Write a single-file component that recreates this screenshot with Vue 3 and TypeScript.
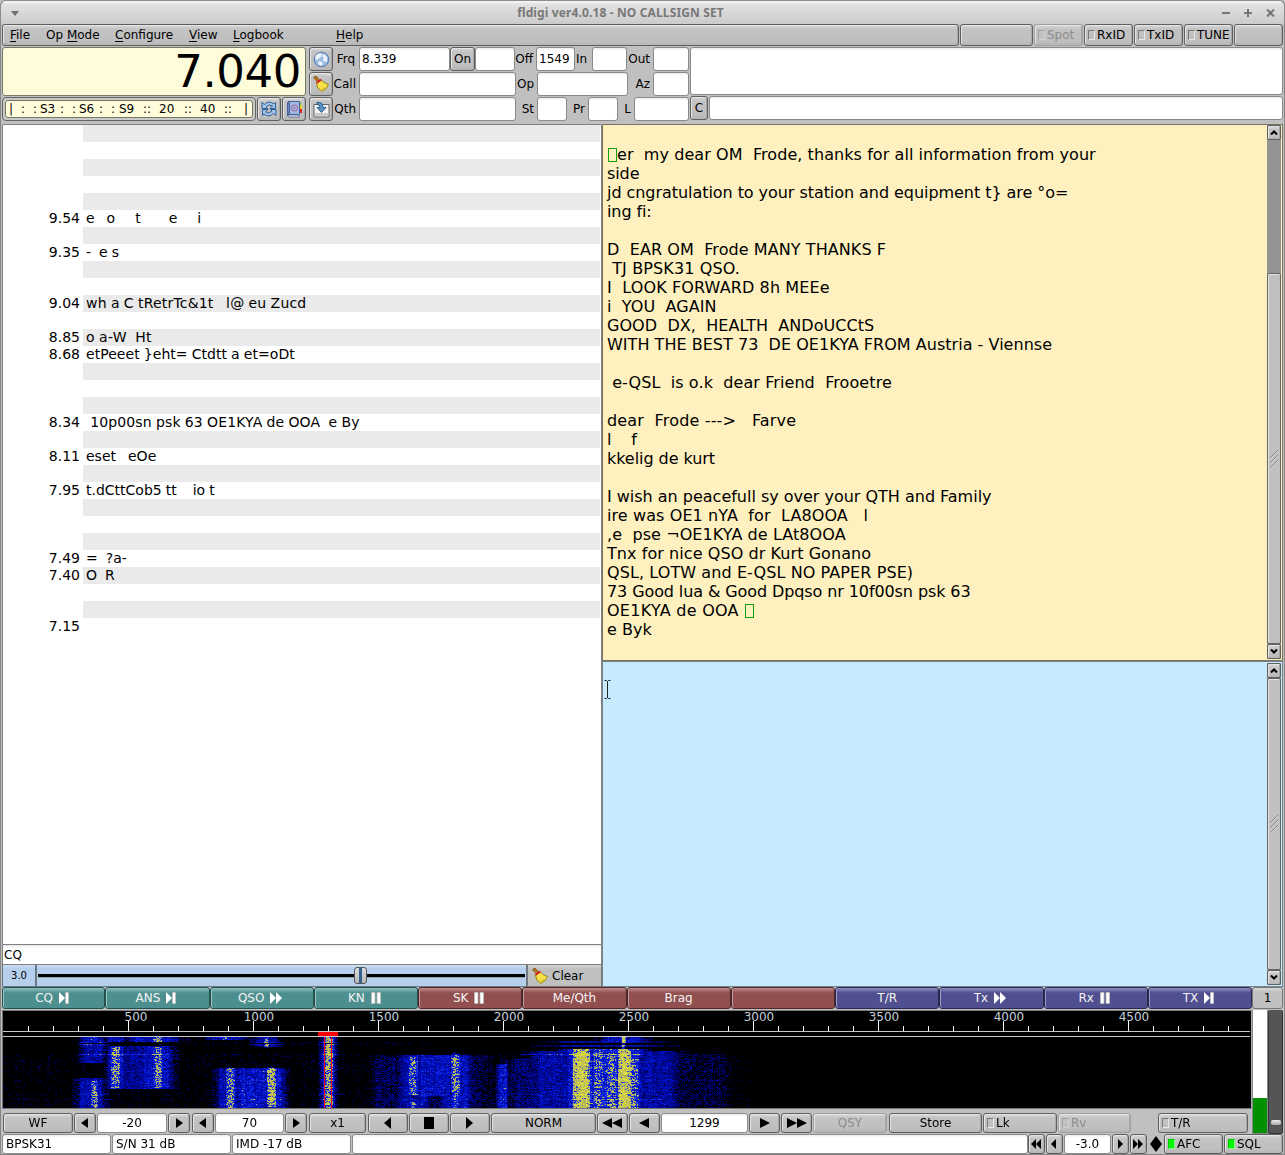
<script setup lang="ts">
import { onMounted, ref } from 'vue'

interface Channel { freq: string; text: string; tracking: number }
interface Line { text: string; tracking: number }
interface Macro { label: string; icon: '' | 'next' | 'ff' | 'pause'; tone: 'teal' | 'red' | 'violet' }
interface Signal { x: number; w: number; y0: number; y1: number; s: number }

const channels: Channel[] = Array.from({ length: 30 }, () => ({ freq: '', text: '', tracking: 0 }))
const heard: Record<number, [string, string, number]> = {
  5: ['9.54', 'e   o     t       e     i', 0],
  7: ['9.35', '-  e s', 0],
  10: ['9.04', 'wh a C tRetrTc&1t   l@ eu Zucd', 0.19],
  12: ['8.85', 'o a-W  Ht', 0.25],
  13: ['8.68', 'etPeeet }eht= Ctdtt a et=oDt', 0.05],
  17: ['8.34', ' 10p00sn psk 63 OE1KYA de OOA  e By', 0.14],
  19: ['8.11', 'eset   eOe', 0],
  21: ['7.95', 't.dCttCob5 tt    io t', 0],
  25: ['7.49', '=  ?a-', 0],
  26: ['7.40', 'O  R', 0],
  29: ['7.15', '', 0],
}
for (const key of Object.keys(heard)) {
  const [freq, text, tracking] = heard[Number(key)]
  channels[Number(key)] = { freq, text, tracking }
}

// '~' marks a non-printable character, drawn as a hollow green box
const received: Line[] = [
  { text: '', tracking: 0 },
  { text: '~er  my dear OM  Frode, thanks for all information from your', tracking: 0.07 },
  { text: 'side', tracking: -0.1 },
  { text: 'jd cngratulation to your station and equipment t} are °o=', tracking: -0.055 },
  { text: 'ing fi:', tracking: -0.1 },
  { text: '', tracking: 0 },
  { text: 'D  EAR OM  Frode MANY THANKS F', tracking: 0.08 },
  { text: ' TJ BPSK31 QSO.', tracking: 0.12 },
  { text: 'I  LOOK FORWARD 8h MEEe', tracking: 0.12 },
  { text: 'i  YOU  AGAIN', tracking: 0.06 },
  { text: 'GOOD  DX,  HEALTH  ANDoUCCtS', tracking: 0.05 },
  { text: 'WITH THE BEST 73  DE OE1KYA FROM Austria - Viennse', tracking: 0.03 },
  { text: '', tracking: 0 },
  { text: ' e-QSL  is o.k  dear Friend  Frooetre', tracking: 0.08 },
  { text: '', tracking: 0 },
  { text: 'dear  Frode --->   Farve', tracking: 0.17 },
  { text: 'l    f', tracking: -0.1 },
  { text: 'kkelig de kurt', tracking: -0.05 },
  { text: '', tracking: 0 },
  { text: 'I wish an peacefull sy over your QTH and Family', tracking: -0.01 },
  { text: 'ire was OE1 nYA  for  LA8OOA   l', tracking: 0.1 },
  { text: ',e  pse ¬OE1KYA de LAt8OOA', tracking: 0.08 },
  { text: 'Tnx for nice QSO dr Kurt Gonano', tracking: 0.07 },
  { text: 'QSL, LOTW and E-QSL NO PAPER PSE)', tracking: 0.09 },
  { text: '73 Good lua & Good Dpqso nr 10f00sn psk 63', tracking: -0.1 },
  { text: 'OE1KYA de OOA ~', tracking: 0.27 },
  { text: 'e Byk', tracking: 0 },
]
const split = (line: string): string[] => line.split(/(~)/).filter((p) => p.length > 0)

const macros: Macro[] = [
  { label: 'CQ', icon: 'next', tone: 'teal' },
  { label: 'ANS', icon: 'next', tone: 'teal' },
  { label: 'QSO', icon: 'ff', tone: 'teal' },
  { label: 'KN', icon: 'pause', tone: 'teal' },
  { label: 'SK', icon: 'pause', tone: 'red' },
  { label: 'Me/Qth', icon: '', tone: 'red' },
  { label: 'Brag', icon: '', tone: 'red' },
  { label: '', icon: '', tone: 'red' },
  { label: 'T/R', icon: '', tone: 'violet' },
  { label: 'Tx', icon: 'ff', tone: 'violet' },
  { label: 'Rx', icon: 'pause', tone: 'violet' },
  { label: 'TX', icon: 'next', tone: 'violet' },
]

const ticks = Array.from({ length: 49 }, (_, i) => i + 1)
const labels = Array.from({ length: 9 }, (_, i) => (i + 1) * 500)

const fall = ref<HTMLCanvasElement | null>(null)

// broad blue areas of each signal
const bodies: Signal[] = [
  { x: 90, w: 11, y0: 0, y1: 26, s: 0.46 },
  { x: 88, w: 13, y0: 41, y1: 71, s: 0.47 },
  { x: 113, w: 8, y0: 9, y1: 52, s: 0.54 },
  { x: 153, w: 15, y0: 9, y1: 52, s: 0.52 },
  { x: 131, w: 14, y0: 9, y1: 52, s: 0.42 },
  { x: 112, w: 9, y0: 0, y1: 5, s: 0.5 },
  { x: 150, w: 24, y0: 0, y1: 5, s: 0.52 },
  { x: 226, w: 12, y0: 31, y1: 71, s: 0.48 },
  { x: 248, w: 14, y0: 31, y1: 71, s: 0.55 },
  { x: 268, w: 12, y0: 31, y1: 71, s: 0.56 },
  { x: 222, w: 18, y0: 0, y1: 3, s: 0.5 },
  { x: 263, w: 12, y0: 0, y1: 10, s: 0.4 },
  { x: 325, w: 7, y0: 0, y1: 71, s: 0.54 },
  { x: 411, w: 15, y0: 18, y1: 71, s: 0.48 },
  { x: 431, w: 18, y0: 18, y1: 59, s: 0.54 },
  { x: 452, w: 15, y0: 18, y1: 71, s: 0.5 },
  { x: 384, w: 14, y0: 22, y1: 71, s: 0.27 },
  { x: 430, w: 55, y0: 18, y1: 71, s: 0.26 },
  { x: 499, w: 5, y0: 27, y1: 71, s: 0.56 },
  { x: 545, w: 40, y0: 22, y1: 71, s: 0.33 },
  { x: 578, w: 16, y0: 12, y1: 71, s: 0.58 },
  { x: 600, w: 24, y0: 12, y1: 71, s: 0.61 },
  { x: 622, w: 17, y0: 12, y1: 71, s: 0.61 },
  { x: 560, w: 30, y0: 14, y1: 71, s: 0.45 },
  { x: 640, w: 32, y0: 14, y1: 71, s: 0.47 },
  { x: 620, w: 20, y0: 0, y1: 5, s: 0.52 },
  { x: 605, w: 50, y0: 4, y1: 6, s: 0.44 },
  { x: 602, w: 55, y0: 8, y1: 10, s: 0.4 },
  { x: 690, w: 38, y0: 17, y1: 71, s: 0.22 },
]
// bright cores
const cores: Signal[] = [
  { x: 90, w: 3, y0: 0, y1: 4, s: 0.24 },
  { x: 91, w: 3, y0: 44, y1: 71, s: 0.31 },
  { x: 112, w: 4, y0: 10, y1: 51, s: 0.26 },
  { x: 154, w: 4, y0: 0, y1: 5, s: 0.34 },
  { x: 154, w: 4, y0: 10, y1: 51, s: 0.27 },
  { x: 221, w: 3, y0: 0, y1: 3, s: 0.34 },
  { x: 263, w: 2, y0: 0, y1: 11, s: 0.4 },
  { x: 227, w: 4, y0: 31, y1: 71, s: 0.32 },
  { x: 268, w: 4, y0: 30, y1: 70, s: 0.32 },
  { x: 325, w: 4, y0: 0, y1: 71, s: 0.34 },
  { x: 410, w: 4, y0: 20, y1: 58, s: 0.27 },
  { x: 410, w: 3, y0: 65, y1: 71, s: 0.26 },
  { x: 452, w: 4, y0: 15, y1: 57, s: 0.28 },
  { x: 452, w: 3, y0: 57, y1: 71, s: 0.18 },
  { x: 578, w: 8, y0: 12, y1: 71, s: 0.42 },
  { x: 595, w: 4, y0: 12, y1: 71, s: 0.15 },
  { x: 608, w: 4, y0: 16, y1: 71, s: 0.15 },
  { x: 621, w: 6, y0: 12, y1: 71, s: 0.4 },
  { x: 620, w: 2, y0: 0, y1: 12, s: 0.5 },
  { x: 630, w: 4, y0: 22, y1: 71, s: 0.12 },
]

onMounted(() => {
  const cv = fall.value
  const ctx = cv ? cv.getContext('2d') : null
  if (!cv || !ctx) return
  const W = cv.width
  const H = cv.height
  const img = ctx.createImageData(W, H)
  let seed = 7040
  const rnd = (): number => {
    seed = (seed * 1664525 + 1013904223) >>> 0
    return seed / 4294967296
  }
  const column = Array.from({ length: W }, () => (rnd() - 0.5) * 0.09)
  let prev = 0
  for (let y = 0; y < H; y++) {
    const rowNoise = (rnd() - 0.5) * 0.06
    for (let x = 0; x < W; x++) {
      let v = 0
      for (const b of bodies) {
        if (y < b.y0 || y >= b.y1) continue
        const d = Math.abs(x - b.x) / b.w
        if (d < 1.6) v = Math.max(v, b.s * (d < 0.75 ? 1 : Math.exp(-(d - 0.75) * 1.6)))
      }
      for (const c of cores) {
        if (y < c.y0 || y >= c.y1) continue
        const d = Math.abs(x - c.x) / c.w
        if (d <= 1.1) v += c.s * (1 - d * d * 0.5)
      }
      prev = prev * 0.35 + (rnd() - 0.5) * 0.5
      const noise = prev * (v > 0.7 ? 0.85 : v > 0.15 ? 0.6 : 0.75)
      if (x < 750) {
        if (v < 0.15) v = y > 17 ? 0.03 : -0.1
        if (x > 560 && v < 0.2) v -= 0.03
        if (y % 5 === 2 && y > 55 && x % 3 !== 0) v += 0.11
        if (y === 17 && x > 60 && x < 640) v += 0.2
        if ((y === 5 || y === 7) && x > 65 && x < 430) v += 0.2
        v += noise + column[x] + rowNoise
        if (y === 6 && x < 345) v *= 0.35
      }
      let r = 0, g = 0, bl = 0
      if (v > 0.78) {
        const t = Math.min(1, (v - 0.78) / 0.4)
        r = 165 + 60 * t; g = 165 + 60 * t; bl = 110 - 55 * t
      } else if (v > 0.62) {
        const t = (v - 0.62) / 0.16
        r = 5 + 40 * t; g = 25 + 50 * t; bl = 225
      } else if (v > 0.18) {
        const t = (v - 0.18) / 0.44
        g = 22 * t * t; bl = 45 + 180 * t
      }
      const i = (y * W + x) * 4
      img.data[i] = r; img.data[i + 1] = g; img.data[i + 2] = bl; img.data[i + 3] = 255
    }
  }
  ctx.putImageData(img, 0, 0)
})
</script>

<template>
  <div class="window">
    <header class="titlebar">
      <svg class="tmenu" width="8" height="5" viewBox="0 0 8 5"><path d="M0 0h8L4 5z" fill="#6e6e6e" /></svg>
      <span class="title">fldigi ver4.0.18 - NO CALLSIGN SET</span>
      <svg class="tbtns" width="54" height="10" viewBox="0 0 54 10" stroke="#777" stroke-width="2" fill="none">
        <path d="M0 5h8M22 5h8M26 1v8M45 1.500l7 7M52 1.500l-7 7" />
      </svg>
    </header>

    <nav class="menurow">
      <div class="box menus">
        <span class="m1"><u>F</u>ile</span><span class="m2">Op <u>M</u>ode</span><span class="m3"><u>C</u>onfigure</span>
        <span class="m4"><u>V</u>iew</span><span class="m5"><u>L</u>ogbook</span><span class="m6"><u>H</u>elp</span>
      </div>
      <div class="box"></div>
      <div class="box light off"><i class="led"></i>Spot</div>
      <div class="box light"><i class="led"></i>RxID</div>
      <div class="box light"><i class="led"></i>TxID</div>
      <div class="box light"><i class="led"></i>TUNE</div>
      <div class="box"></div>
    </nav>

    <section class="top">
      <div class="rig">
        <div class="freq">7.040</div>
        <div class="meterrow">
          <div class="meter"><div class="scale"><span>|</span><span>:</span><span>:</span><span>S3</span><span>:</span><span>:</span><span>S6</span><span>:</span><span>:</span><span>S9</span><span>::</span><span>20</span><span>::</span><span>40</span><span>::</span><span>|</span></div></div>
          <button class="btn sq">
            <svg width="16" height="16" viewBox="0 0 16 16"><path d="M1 7.500V1.500l2.500 2Q8-1 13 3l1.500-1.500v6H9L11.500 5Q8 2.500 5 6l1.500 1.500z" fill="#a4c4e6" stroke="#31629d" /><path d="M15 8.500v6l-2.500-2Q8 17 3 13l-1.500 1.500v-6H7L4.500 11Q8 13.500 11 10L9.500 8.500z" fill="#a4c4e6" stroke="#31629d" /></svg>
          </button>
          <button class="btn sq">
            <svg width="17" height="17" viewBox="0 0 17 17"><path d="M13 4h3v4h-3z" fill="#e8d020" /><path d="M13 8h3v4h-3z" fill="#d22" /><path d="M13 1h2v3h-2z" fill="#7ac142" /><path d="M2.500.5h11v13h-11z" fill="#a3b8de" stroke="#48639c" /><path d="M1.500 2q0-1.500 2-1.500v13q-2 0-2 1.500z" fill="#6a88c4" stroke="#48639c" /><path d="M2 14h11v2H3q-1 0-1-2z" fill="#eee" stroke="#48639c" stroke-width=".8" /><circle cx="8.500" cy="7" r="3" fill="none" stroke="#a070ae" stroke-width="1.100" /><circle cx="8.500" cy="7" r="1" fill="#a070ae" /></svg>
          </button>
        </div>
      </div>

      <div class="tools">
        <button class="btn sq">
          <svg width="17" height="17" viewBox="0 0 17 17"><circle cx="8.500" cy="8.500" r="7.300" fill="#9bbbe2" stroke="#5079b0" /><path d="M3 4l4-2 2 1-1 3-2 1-1 2-3-1zM11 3l3 3v4l-2 1-2-2 1-2-2-2zM6 10l3 1 1 2-2 2-3-2z" fill="#eef4fb" /></svg>
        </button>
        <button class="btn sq">
          <svg width="18" height="18" viewBox="0 0 18 18"><path d="M1.500 2.500L4 1l3.500 4L5 6.500z" fill="#b8741c" stroke="#71420c" stroke-width=".7" /><path d="M4.500 8.500L9.500 5q1 2.500 7 4.500-1 4-6.500 7Q4.500 13.500 4.500 8.500z" fill="#f7e04a" stroke="#8f7a0c" stroke-width=".9" /><path d="M4.300 8l5-3.500" stroke="#d22" stroke-width="1.700" /><path d="M9 15l4-2.500" stroke="#c2a81c" stroke-width=".8" /></svg>
        </button>
        <button class="btn sq">
          <svg width="17" height="17" viewBox="0 0 17 17"><path d="M1 3.500h15v12.500H1z" fill="#f3f3f3" stroke="#666" /><path d="M2 12h13v3H2z" fill="#c9c9c9" /><path d="M4 1.500q6-1 6 5h3l-4.500 5L4 6.500h3q0-3-3-3z" fill="#5b94c4" stroke="#24587f" stroke-width=".9" /></svg>
        </button>
      </div>

      <div class="log">
        <div class="lrow r1">
          <label class="first">Frq</label><div class="field">8.339</div><button class="btn">On</button><div class="field"></div><label>Off</label><div class="field">1549</div><label class="left">In</label><div class="field"></div><label>Out</label><div class="field"></div>
        </div>
        <div class="lrow r2">
          <label>Call</label><div class="field"></div><label>Op</label><div class="field"></div><label>Az</label><div class="field"></div>
        </div>
        <div class="lrow r3">
          <label>Qth</label><div class="field"></div><label>St</label><div class="field"></div><label>Pr</label><div class="field"></div><label>L</label><div class="field"></div>
        </div>
      </div>

      <div class="notes">
        <div class="field big"></div>
        <div class="crow"><button class="btn">C</button><div class="field"></div></div>
      </div>
    </section>

    <main class="main">
      <div class="browser">
        <div class="list">
          <div v-for="(c, i) in channels" :key="i" class="ch" :class="{ odd: i % 2 === 0 }">
            <span class="f">{{ c.freq }}</span><span class="t" :style="{ letterSpacing: c.tracking + 'px' }">{{ c.text }}</span>
          </div>
        </div>
        <div class="search">CQ</div>
        <div class="sliderrow">
          <div class="val">3.0</div>
          <div class="slider"><div class="groove"></div><div class="knob"></div></div>
          <div class="clear">
            <svg width="18" height="18" viewBox="0 0 18 18"><path d="M1.500 2.500L4 1l3.500 4L5 6.500z" fill="#b8741c" stroke="#71420c" stroke-width=".7" /><path d="M4.500 8.500L9.500 5q1 2.500 7 4.500-1 4-6.500 7Q4.500 13.500 4.500 8.500z" fill="#f7e04a" stroke="#8f7a0c" stroke-width=".9" /><path d="M4.300 8l5-3.500" stroke="#d22" stroke-width="1.700" /><path d="M9 15l4-2.500" stroke="#c2a81c" stroke-width=".8" /></svg>
            Clear
          </div>
        </div>
      </div>
      <div class="panes">
        <div class="pane rx">
          <div class="text">
            <div v-for="(line, i) in received" :key="i" class="ln" :style="{ letterSpacing: line.tracking + 'px' }"><template v-for="(p, j) in split(line.text)" :key="j"><i v-if="p === '~'" class="ctl"></i><span v-else>{{ p }}</span></template></div>
          </div>
          <div class="sb">
            <div class="btn arrow"><svg width="8" height="5" viewBox="0 0 8 5"><path d="M1 4.500L4 1.500l3 3" stroke="#000" stroke-width="2" fill="none" /></svg></div>
            <div class="gapline"></div>
            <div class="thumb"><svg width="10" height="22" viewBox="0 0 10 22"><path d="M1 10l8-8M1 15l8-8M1 20l8-8" stroke="#888" /><path d="M1 11l8-8M1 16l8-8M1 21l8-8" stroke="#ddd" stroke-width=".7" /></svg></div>
            <div class="btn arrow"><svg width="8" height="5" viewBox="0 0 8 5"><path d="M1 .5l3 3 3-3" stroke="#000" stroke-width="2" fill="none" /></svg></div>
          </div>
        </div>
        <div class="pane tx">
          <div class="text">
            <svg class="beam" width="7" height="19" viewBox="0 0 7 19"><path d="M.5.5h2l1 1 1-1h2M.5 18.500h2l1-1 1 1h2M3.500 1v17" stroke="#222" fill="none" /></svg>
          </div>
          <div class="sb">
            <div class="btn arrow"><svg width="8" height="5" viewBox="0 0 8 5"><path d="M1 4.500L4 1.500l3 3" stroke="#000" stroke-width="2" fill="none" /></svg></div>
            <div class="thumb"><svg width="10" height="22" viewBox="0 0 10 22"><path d="M1 10l8-8M1 15l8-8M1 20l8-8" stroke="#888" /><path d="M1 11l8-8M1 16l8-8M1 21l8-8" stroke="#ddd" stroke-width=".7" /></svg></div>
            <div class="btn arrow"><svg width="8" height="5" viewBox="0 0 8 5"><path d="M1 .5l3 3 3-3" stroke="#000" stroke-width="2" fill="none" /></svg></div>
          </div>
        </div>
      </div>
    </main>

    <div class="macros">
      <div v-for="(m, i) in macros" :key="i" class="macro" :class="[m.tone, { withicon: m.icon }]">
        <span v-if="m.label">{{ m.label }}</span>
        <svg v-if="m.icon === 'next'" width="10" height="12" viewBox="0 0 10 12"><path d="M0 0l6 6-6 6z" fill="#fff" /><path d="M6.500 0.500h3v11h-3z" fill="#fff" stroke="#bbb" stroke-width=".8" /></svg>
        <svg v-else-if="m.icon === 'ff'" width="12" height="12" viewBox="0 0 12 12"><path d="M0 0l6 6-6 6zM6 0l6 6-6 6z" fill="#fff" /></svg>
        <svg v-else-if="m.icon === 'pause'" width="10" height="12" viewBox="0 0 10 12"><path d="M.5.5h3.500v11H.5zM6 .5h3.500v11H6z" fill="#fff" stroke="#bbb" stroke-width=".8" /></svg>
      </div>
      <div class="macro page">1</div>
    </div>

    <div class="lower">
      <div class="wfcol">
        <div class="wf">
          <svg class="axis" width="1247" height="26" viewBox="0 0 1247 26">
            <rect v-for="t in ticks" :key="t" :x="t * 25" :y="t % 5 === 0 ? 10 : 15" width="1" :height="t % 5 === 0 ? 10 : 5" fill="#fff" />
            <text v-for="l in labels" :key="l" :x="l / 4 + (l === 500 ? 8 : 6)" y="10" text-anchor="middle">{{ l }}</text>
            <rect x="0" y="20" width="1247" height="1" fill="#c8c8c8" />
            <rect x="0" y="25" width="1247" height="1" fill="#c8c8c8" />
            <rect x="315" y="21" width="20" height="4" fill="#f00" />
          </svg>
          <div class="fallwrap">
            <canvas ref="fall" width="1247" height="71"></canvas>
            <div class="marker"></div>
          </div>
        </div>
        <div class="controls">
          <div class="btn">WF</div>
          <div class="btn nudge"><svg width="7" height="10" viewBox="0 0 7 10"><path d="M7 0v10L0 5z" /></svg></div>
          <div class="field num">-20</div>
          <div class="btn"><svg width="7" height="10" viewBox="0 0 7 10"><path d="M0 0v10l7-5z" /></svg></div>
          <div class="btn nudge"><svg width="7" height="10" viewBox="0 0 7 10"><path d="M7 0v10L0 5z" /></svg></div>
          <div class="field num">70</div>
          <div class="btn"><svg width="7" height="10" viewBox="0 0 7 10"><path d="M0 0v10l7-5z" /></svg></div>
          <div class="btn">x1</div>
          <div class="btn nudge"><svg width="7" height="12" viewBox="0 0 7 12"><path d="M7 0v12L0 6z" /></svg></div>
          <div class="btn"><svg width="10" height="12" viewBox="0 0 10 12"><path d="M0 0h10v12H0z" /></svg></div>
          <div class="btn nudge"><svg width="7" height="12" viewBox="0 0 7 12"><path d="M0 0v12l7-6z" /></svg></div>
          <div class="btn">NORM</div>
          <div class="btn nudge"><svg width="20" height="10" viewBox="0 0 20 10"><path d="M10 0v10L0 5zM20 0v10L10 5z" /></svg></div>
          <div class="btn nudge"><svg width="10" height="10" viewBox="0 0 10 10"><path d="M10 0v10L0 5z" /></svg></div>
          <div class="field num">1299</div>
          <div class="btn"><svg width="10" height="10" viewBox="0 0 10 10"><path d="M0 0v10l10-5z" /></svg></div>
          <div class="btn"><svg width="20" height="10" viewBox="0 0 20 10"><path d="M0 0v10l10-5zM10 0v10l10-5z" /></svg></div>
          <div class="btn off">QSY</div>
          <div class="btn">Store</div>
          <div class="btn light"><i class="led"></i>Lk</div>
          <div class="btn light off"><i class="led"></i>Rv</div>
          <div class="btn light tr"><i class="led"></i>T/R</div>
        </div>
      </div>
      <div class="signal"><div class="level"></div></div>
      <div class="squelch"><div class="sqknob"></div></div>
    </div>

    <footer class="status">
      <div class="field">BPSK31</div>
      <div class="field">S/N 31 dB</div>
      <div class="field">IMD -17 dB</div>
      <div class="field"></div>
      <div class="btn nudge"><svg width="10" height="10" viewBox="0 0 10 10"><path d="M5 0v10L0 5zM10 0v10L5 5z" /></svg></div>
      <div class="btn nudge"><svg width="5" height="10" viewBox="0 0 5 10"><path d="M5 0v10L0 5z" /></svg></div>
      <div class="field num">-3.0</div>
      <div class="btn"><svg width="5" height="10" viewBox="0 0 5 10"><path d="M0 0v10l5-5z" /></svg></div>
      <div class="btn nudge"><svg width="10" height="10" viewBox="0 0 10 10"><path d="M0 0v10l5-5zM5 0v10l5-5z" /></svg></div>
      <div class="dia"><svg width="12" height="16" viewBox="0 0 12 16"><path d="M6 0l6 8-6 8-6-8z" /></svg></div>
      <div class="btn light on"><i class="led"></i>AFC</div>
      <div class="btn light on"><i class="led"></i>SQL</div>
    </footer>
  </div>
</template>

<style>
body { margin: 0; background: #c0c0c0; overflow: hidden; }
</style>

<style scoped>
* { box-sizing: border-box; }
.window {
  width: 1285px; height: 1155px; background: #c0c0c0; color: #000;
  font: 12px/14px "DejaVu Sans", sans-serif;
  border: solid #858585; border-width: 0 1px 1px 1px; padding: 0 1px;
  display: flex; flex-direction: column; border-radius: 6px 6px 0 0;
}
.titlebar {
  height: 24px; margin: 0 -2px; padding: 1px 8px 0 10px; flex: none;
  display: grid; grid-template-columns: 8px 1fr 54px; align-items: center;
  background: linear-gradient(#f4f4f4 1px, #e2e2e2 3px, #cbcbcb);
  border: 1px solid #8c8c8c; border-bottom: 0; border-radius: 6px 6px 0 0;
}
.title { text-align: center; font: bold 12px/16px "Noto Sans", "Open Sans", sans-serif; letter-spacing: 0.13px; color: #787878; }
.box, .btn {
  font: inherit; color: inherit; padding: 0; border: 1px solid #5f5f5f; border-radius: 3px;
  background: linear-gradient(#d9d9d9, #c3c3c3 4px, #bfbfbf 80%, #b6b6b6);
  box-shadow: inset 1px 1px #e4e4e4, inset -1px 0 #a8a8a8;
  display: flex; align-items: center; justify-content: center;
}
.nudge { padding-right: 2px; }
.off { color: #8c8c8c; border-color: #a0a0a0; }
.field {
  background: linear-gradient(#eee, #fff 3px); border: 1px solid #8a8a8a; border-radius: 3px;
  display: flex; align-items: center; padding-left: 3px; white-space: pre;
}
.num { justify-content: center; padding: 0; }
.led { width: 7px; height: 10px; border: 1px solid; border-color: #777 #e8e8e8 #e8e8e8 #777; flex: none; }
.off .led { border-color: #a0a0a0 #d0d0d0 #d0d0d0 #a0a0a0; }
.on .led { background: #00f800; border-color: #00c800 #80ff80 #80ff80 #00c800; }
.light { justify-content: flex-start; padding-left: 3px; gap: 2px; }

.menurow { flex: none; height: 22px; display: grid; grid-template-columns: 957px 73px 49px 49px 49px 49px 1fr; gap: 1px; }
.menus { justify-content: flex-start; white-space: pre; }
.menus span { text-align: left; height: 14px; }
.menus u { text-underline-offset: 2px; text-decoration-thickness: 1px; }
.m1 { width: 36px; margin-left: 7px; }
.m2 { width: 69px; }
.m3 { width: 74px; }
.m4 { width: 44px; }
.m5 { width: 103px; }

.top { flex: none; height: 78px; padding-top: 1px; display: flex; }
.rig { width: 305px; }
.freq {
  width: 304px; height: 49px; margin-bottom: 1px; border: 1px solid #777766; border-radius: 3px; background: #fffcdc;
  font-size: 45px; line-height: 47px; text-align: right; padding-right: 4px; letter-spacing: -0.4px;
}
.meterrow { display: flex; height: 24px; }
.meter { width: 254px; height: 24px; margin-right: 1px; padding: 2px; border: 1px solid #666; border-radius: 4px; background: #c8c8c8; }
.scale {
  height: 18px; border: 1px solid #777766; border-radius: 3px; background: #fffcdc;
  display: grid; grid-template-columns: 12px 12px 7px 20px 12px 7px 20px 12px 8px 24px 16px 25px 16px 24px 20px 6px;
  font-size: 12px; line-height: 16px; padding-left: 3px;
}
.sq { width: 24px; height: 24px; flex: none; }
.meterrow .sq { margin-right: 1px; }
.tools { width: 25px; padding-left: 2px; display: flex; flex-direction: column; gap: 1px; }
.log { width: 357px; display: flex; flex-direction: column; gap: 1px; }
.lrow { height: 24px; display: grid; align-items: center; }
.lrow .field, .lrow .btn { height: 24px; }
.lrow .field { padding-left: 2px; }
.lrow label { text-align: right; padding-right: 3px; }
.lrow label.first { padding-right: 4px; }
.lrow label.left { text-align: left; padding-left: 1px; }
.r1 { grid-template-columns: 27px 91px 25px 40px 21px 39px 17px 35px 26px 36px; }
.r2 { grid-template-columns: 27px 157px 21px 91px 25px 36px; }
.r3 { grid-template-columns: 27px 157px 21px 30px 21px 30px 16px 55px; }
.notes { flex: 1; padding-left: 1px; }
.big { height: 48px; margin-bottom: 1px; }
.crow { display: flex; height: 24px; }
.crow .btn { width: 18px; height: 24px; margin-right: 1px; }
.crow .field { flex: 1; height: 24px; }

.main { flex: none; height: 863px; display: flex; }
.browser { width: 600px; display: flex; flex-direction: column; }
.list { height: 821px; background: #fff; border: 1px solid #808080; border-radius: 2px 2px 0 0; font-size: 14px; line-height: 17px; }
.ch { height: 17px; display: flex; white-space: pre; margin-right: 1px; }
.f { width: 80px; padding-right: 3px; text-align: right; }
.t { flex: 1; padding-left: 3px; word-spacing: -0.45px; }
.odd .t { background: #eaeaea; }
.search { height: 20px; background: linear-gradient(#e8e8e8, #fff 3px); border: solid #808080; border-width: 0 1px 1px; line-height: 21px; padding-left: 1px; }
.sliderrow { height: 22px; display: grid; grid-template-columns: 34px 491px 75px; }
.val, .slider, .clear { border: 1px solid #6a7785; border-top: 0; background: linear-gradient(#cbdff5, #b5cfec 4px); }
.val { font-size: 10px; line-height: 21px; text-align: center; }
.slider { display: grid; align-items: center; }
.groove { grid-area: 1/1; height: 3px; background: #000; box-shadow: 0 1px #8aa; margin: 0 1px; }
.knob {
  grid-area: 1/1; width: 13px; height: 17px; margin-left: 317px; border: 1px solid #555; border-radius: 3px;
  background: linear-gradient(90deg, transparent 4px, #335f8f 4px, #335f8f 7px, transparent 7px), linear-gradient(#ddd, #b5b5b5);
}
.clear { background: linear-gradient(#d5d5d5, #c0c0c0 4px); border-color: #777; display: flex; align-items: center; gap: 3px; padding-left: 3px; }

.panes { flex: 1; display: flex; flex-direction: column; }
.pane { border: 1px solid #7b7460; display: flex; }
.rx { height: 537px; background: #fff0bf; }
.tx { height: 326px; background: #c8eaff; border-color: #75858f; }
.text { flex: 1; padding: 1px 0 0 4px; font-size: 16px; }
.ln { height: 19px; line-height: 19px; white-space: pre; }
.ctl { display: inline-block; width: 9px; height: 14px; margin: 0 0 0 1px; vertical-align: -2px; border: 1px solid #12a012; }
.sb { width: 14px; margin-right: 1px; background: #949494; display: flex; flex-direction: column; }
.rx .sb { margin: 0 1px 1px 0; }
.tx .sb { margin: 1px 1px 1px 0; }
.arrow { height: 15px; flex: none; border-radius: 2px; }
.gapline { height: 133px; flex: none; }
.thumb {
  flex: 1; border: 1px solid #666; border-radius: 2px; background: #c0c0c0;
  box-shadow: inset 1px 1px #e2e2e2; display: flex; align-items: center; justify-content: center;
}
.beam { display: block; margin: 17px 0 0 -3px; }

.macros { flex: none; height: 23px; display: grid; grid-template-columns: 103.3px repeat(11, 104.25px) 1fr; }
.macro {
  border: solid; border-width: 1px; border-radius: 3px; color: #f4f4f4;
  display: flex; align-items: center; justify-content: center; gap: 6px; height: 22px;
}
.withicon { padding-right: 3px; }
.teal { border-color: #24504f; background: linear-gradient(#8fc0c0, #4d8f8f 5px); box-shadow: inset 1px 0 #9cc6c5; }
.red { border-color: #4e2626; background: linear-gradient(#c08e8e, #914f4f 5px); box-shadow: inset 1px 0 #c59c9c; }
.violet { border-color: #27274f; background: linear-gradient(#8f8ec0, #504f8f 5px); box-shadow: inset 1px 0 #9c9cc6; }
.page { color: #000; border-color: #777; background: linear-gradient(#d8d8d8, #c0c0c0 4px); }

.lower { flex: none; height: 124px; display: flex; }
.wfcol { width: 1250px; }
.wf { width: 1250px; height: 99px; border: 1px solid #777; border-right-color: #aaa; background: #000; }
.axis { display: block; font: 12px "DejaVu Sans", sans-serif; fill: #c4d0d8; }
.fallwrap { display: grid; width: 1247px; height: 71px; }
.fallwrap canvas { grid-area: 1/1; }
.marker { grid-area: 1/1; width: 8px; margin-left: 321px; border: solid #f00; border-width: 0 1px; }
.controls { height: 21px; width: 1245px; margin: 4px 0 0 1px; display: flex; gap: 1px; }
.controls > * { flex: none; width: 22px; height: 20px; }
.controls > :nth-child(1) { width: 70px; }
.controls > :nth-child(3) { width: 70px; }
.controls > :nth-child(4) { width: 22px; margin-right: 1px; }
.controls > :nth-child(6) { width: 69px; }
.controls > :nth-child(7) { margin-right: 1px; }
.controls > :nth-child(8) { width: 57px; margin-right: 1px; }
.controls > :nth-child(n+9):nth-child(-n+11) { width: 40px; }
.controls > :nth-child(12) { width: 105px; }
.controls > :nth-child(13), .controls > :nth-child(14) { width: 31px; }
.controls > :nth-child(15) { width: 87px; }
.controls > :nth-child(16), .controls > :nth-child(17) { width: 31px; }
.controls > :nth-child(18) { width: 74px; margin-right: 1px; }
.controls > :nth-child(19) { width: 93px; }
.controls > :nth-child(20) { width: 74px; }
.controls > :nth-child(21) { width: 73px; }
.controls > .tr { width: 90px; margin-left: auto; }
.signal { width: 16px; background: #fff; border: 1px solid #888; border-top: 0; display: flex; align-items: flex-end; }
.level { width: 100%; height: 35px; background: #009000; }
.squelch { flex: 1; background: #555; border: 1px solid #333; border-top: 0; border-radius: 2px; display: flex; align-items: flex-end; justify-content: center; }
.sqknob { width: 10px; height: 5px; margin-bottom: 8px; border-radius: 2px; background: linear-gradient(#eee, #aaa); }

.status { flex: none; height: 20px; display: flex; }
.status > * { flex: none; height: 20px; margin-right: 1px; width: 17px; }
.status .field { border-radius: 3px; }
.status > :nth-child(1) { width: 109px; }
.status > :nth-child(2) { width: 119px; }
.status > :nth-child(3) { width: 119px; }
.status > :nth-child(4) { width: 676px; margin-right: 0; }
.status > :nth-child(7) { width: 47px; }
.status > .dia { width: 15px; display: flex; align-items: center; justify-content: center; }
.status > .light { width: 59px; }
.status > :last-child { flex: 1; margin: 0; }
</style>
